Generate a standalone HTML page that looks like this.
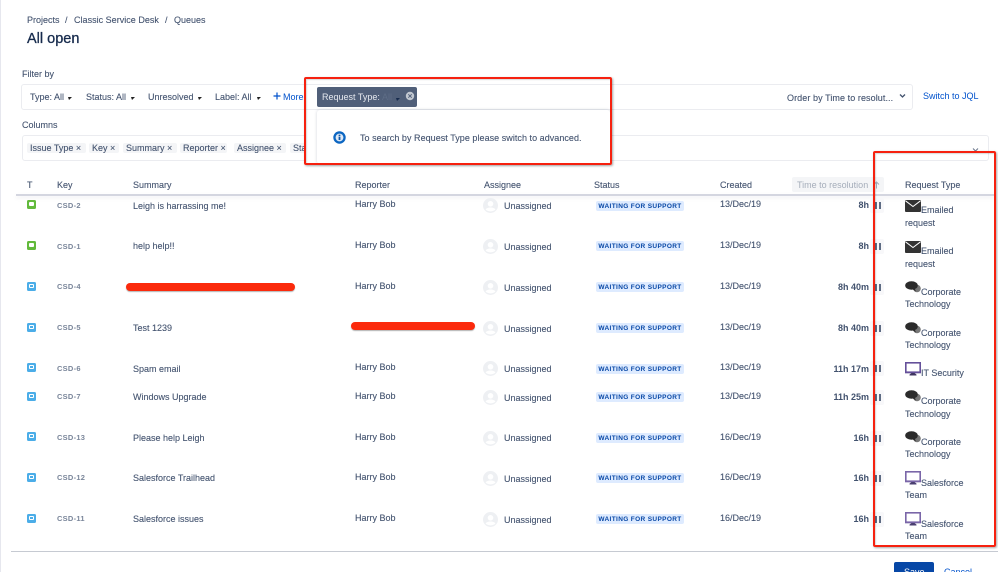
<!DOCTYPE html>
<html>
<head>
<meta charset="utf-8">
<style>
html,body{margin:0;padding:0;background:#fff;}
body{width:998px;height:572px;overflow:hidden;position:relative;font-family:"Liberation Sans",sans-serif;font-size:9px;color:#42526e;}
#w{position:absolute;left:0;top:0;width:998px;height:572px;overflow:hidden;filter:blur(.35px);}
.t{position:absolute;white-space:nowrap;line-height:12px;height:12px;}
.b{position:absolute;box-sizing:border-box;}
.k{color:#7a869a;font-size:7.5px;font-weight:bold;letter-spacing:.25px;}
.h{color:#42526e;-webkit-text-stroke:.1px #42526e;}
.chip{position:absolute;top:143px;height:10px;background:#f4f5f7;border-radius:2px;}
.lz{position:absolute;left:596px;width:88px;height:10px;background:#deebff;border-radius:2px;color:#0747a6;font-size:6.5px;font-weight:bold;line-height:11px;text-align:center;letter-spacing:.35px;white-space:nowrap;}
.ib{position:absolute;left:27px;width:9px;height:9px;border-radius:1.5px;}
.g{background:#63ba3c;}
.bl{background:#4bade8;}
.ib i{position:absolute;left:2px;top:2px;width:5px;height:4px;background:#fff;border-radius:1px;}
.bl i:after{content:"";position:absolute;left:1px;top:1px;width:3px;height:1.5px;background:#4bade8;}
.av{position:absolute;left:483px;width:15px;height:15px;}
.p{position:absolute;left:870px;width:14px;height:15px;background:#f8f8fa;border-radius:2px;}
.p:before,.p:after{content:"";position:absolute;top:4px;width:2px;height:7px;background:#5e6c84;}
.p:before{left:5px;}
.p:after{left:9px;}
.tm{position:absolute;right:129px;font-weight:bold;color:#42526e;line-height:12px;white-space:nowrap;}
.ar{position:absolute;width:4px;height:4px;}
.ic{position:absolute;left:905px;}
.red{position:absolute;box-sizing:border-box;border:2.5px solid #f6210f;border-radius:2px;box-shadow:1px 1px 2px rgba(0,0,0,.35),inset 1px 1px 1px rgba(0,0,0,.15);}
.st{position:absolute;background:#fb2a0c;border-radius:5px;height:8px;box-shadow:0 1px 1px rgba(0,0,0,.3);}
</style>
</head>
<body>
<div id="w">
<div class="b" style="left:0;top:0;width:1px;height:572px;background:#e6e7ee;"></div>

<div class="t h" style="left:27px;top:14px;">Projects</div>
<div class="t h" style="left:65px;top:14px;">/</div>
<div class="t h" style="left:74px;top:14px;letter-spacing:.02px;">Classic Service Desk</div>
<div class="t h" style="left:165px;top:14px;">/</div>
<div class="t h" style="left:174px;top:14px;">Queues</div>
<div class="t" style="left:27px;top:31px;height:17px;line-height:17px;font-size:14.5px;color:#172b4d;-webkit-text-stroke:.3px #172b4d;">All open</div>

<div class="t h" style="left:22px;top:68px;">Filter by</div>
<div class="b" style="left:21px;top:84px;width:892px;height:26px;border:1px solid #ebecf0;border-radius:3px;"></div>
<div class="t h" style="left:30px;top:91px;">Type: All</div>
<div class="t h" style="left:86px;top:91px;">Status: All</div>
<div class="t h" style="left:148px;top:91px;">Unresolved</div>
<div class="t h" style="left:215px;top:91px;">Label: All</div>
<svg class="ar" style="left:68px;top:96px" viewBox="0 0 4 4"><path d="M0 1H4L1 4Z" fill="#222"/></svg>
<svg class="ar" style="left:131px;top:96px" viewBox="0 0 4 4"><path d="M0 1H4L1 4Z" fill="#222"/></svg>
<svg class="ar" style="left:198px;top:96px" viewBox="0 0 4 4"><path d="M0 1H4L1 4Z" fill="#222"/></svg>
<svg class="ar" style="left:257px;top:96px" viewBox="0 0 4 4"><path d="M0 1H4L1 4Z" fill="#222"/></svg>
<svg style="position:absolute;left:273px;top:92px" width="8" height="8" viewBox="0 0 8 8"><path d="M4 .5V7.5M.5 4H7.5" stroke="#0052cc" stroke-width="1.2"/></svg>
<div class="t" style="left:283px;top:91px;color:#0052cc;">More</div>

<div class="t h" style="left:787px;top:92px;letter-spacing:.08px;">Order by Time to resolut...</div>
<svg style="position:absolute;left:899px;top:93px" width="7" height="6" viewBox="0 0 7 6"><path d="M1 1.5L3.5 4L6 1.5" stroke="#42526e" stroke-width="1.3" fill="none"/></svg>
<div class="t" style="left:923px;top:90px;color:#0052cc;">Switch to JQL</div>

<div class="t h" style="left:22px;top:119px;">Columns</div>
<div class="b" style="left:22px;top:135px;width:967px;height:26px;border:1px solid #ebecf0;border-radius:3px;"></div>
<div class="chip" style="left:27px;width:59px;"></div>
<div class="chip" style="left:89px;width:30px;"></div>
<div class="chip" style="left:123px;width:54px;"></div>
<div class="chip" style="left:180px;width:47px;"></div>
<div class="chip" style="left:234px;width:52px;"></div>
<div class="chip" style="left:290px;width:30px;"></div>
<div class="t h" style="left:30px;top:142px;">Issue Type ×</div>
<div class="t h" style="left:92px;top:142px;">Key ×</div>
<div class="t h" style="left:126px;top:142px;">Summary ×</div>
<div class="t h" style="left:183px;top:142px;">Reporter ×</div>
<div class="t h" style="left:237px;top:142px;">Assignee ×</div>
<div class="t h" style="left:293px;top:142px;">Status</div>
<svg style="position:absolute;left:972px;top:148px" width="7" height="4" viewBox="0 0 7 4"><path d="M1 .5L3.5 3L6 .5" stroke="#6b778c" stroke-width="1" fill="none"/></svg>

<!-- popup -->
<div class="b" style="left:305px;top:78px;width:305px;height:86px;background:#fff;"></div>
<div class="b" style="left:305px;top:84px;width:305px;height:26px;border-top:1px solid #ebecf0;border-bottom:1px solid #ebecf0;"></div>
<div class="b" style="left:317px;top:110px;width:293px;height:54px;background:#fff;border-radius:3px;box-shadow:0 0 3px rgba(9,30,66,.18);"></div>
<div class="b" style="left:317px;top:87px;width:100px;height:20px;background:#505f79;border-radius:2px;"></div>
<div class="t" style="left:322px;top:91px;color:#e6e9ef;">Request Type:</div>
<div class="t" style="left:382px;top:91px;color:#5e6d86;">All</div>
<svg class="ar" style="left:396px;top:97px" viewBox="0 0 4 4"><path d="M0 1H4L1 4Z" fill="#172b4d"/></svg>
<svg style="position:absolute;left:405px;top:91px" width="10" height="10" viewBox="0 0 10 10"><circle cx="5" cy="5" r="4.2" fill="#c1c7d0"/><path d="M3.3 3.3L6.7 6.7M6.7 3.3L3.3 6.7" stroke="#505f79" stroke-width="1"/></svg>
<svg style="position:absolute;left:333px;top:131px" width="13" height="13" viewBox="0 0 13 13"><circle cx="6.5" cy="6.5" r="6.2" fill="#0c66c2"/><circle cx="6.5" cy="6.5" r="3.9" fill="#dfe9f5"/><rect x="5.6" y="5.6" width="1.8" height="3.4" fill="#0c56a8"/><rect x="5.6" y="3.7" width="1.8" height="1.3" fill="#0c56a8"/></svg>
<div class="t h" style="left:360px;top:132px;letter-spacing:.04px;">To search by Request Type please switch to advanced.</div>

<!-- table header -->
<div class="t h" style="left:27px;top:179px;">T</div>
<div class="t h" style="left:57px;top:179px;">Key</div>
<div class="t h" style="left:133px;top:179px;">Summary</div>
<div class="t h" style="left:355px;top:179px;">Reporter</div>
<div class="t h" style="left:484px;top:179px;">Assignee</div>
<div class="t h" style="left:594px;top:179px;">Status</div>
<div class="t h" style="left:720px;top:179px;">Created</div>
<div class="b" style="left:792px;top:177px;width:92px;height:15px;background:#f4f5f7;border-radius:2px;"></div>
<div class="t" style="left:797px;top:179px;color:#a5adba;">Time to resolution</div>
<svg style="position:absolute;left:873px;top:181px" width="7" height="8" viewBox="0 0 7 8"><path d="M3.5 7.5V1M1 3.5L3.5 1L6 3.5" stroke="#a5adba" stroke-width="1" fill="none"/></svg>
<div class="t h" style="left:905px;top:179px;">Request Type</div>
<div class="b" style="left:16px;top:194px;width:979px;height:2px;background:#d4d6e0;box-shadow:0 2px 4px rgba(9,30,66,.08);"></div>

<!-- type icons -->
<div class="ib g" style="top:200px;"><i></i></div>
<div class="ib g" style="top:241px;"><i></i></div>
<div class="ib bl" style="top:282px;"><i></i></div>
<div class="ib bl" style="top:323px;"><i></i></div>
<div class="ib bl" style="top:363px;"><i></i></div>
<div class="ib bl" style="top:392px;"><i></i></div>
<div class="ib bl" style="top:432px;"><i></i></div>
<div class="ib bl" style="top:473px;"><i></i></div>
<div class="ib bl" style="top:514px;"><i></i></div>

<!-- keys -->
<div class="t k" style="left:57px;top:200px;">CSD-2</div>
<div class="t k" style="left:57px;top:241px;">CSD-1</div>
<div class="t k" style="left:57px;top:281px;">CSD-4</div>
<div class="t k" style="left:57px;top:322px;">CSD-5</div>
<div class="t k" style="left:57px;top:363px;">CSD-6</div>
<div class="t k" style="left:57px;top:391px;">CSD-7</div>
<div class="t k" style="left:57px;top:432px;">CSD-13</div>
<div class="t k" style="left:57px;top:472px;">CSD-12</div>
<div class="t k" style="left:57px;top:513px;">CSD-11</div>

<!-- summaries -->
<div class="t h" style="left:133px;top:200px;">Leigh is harrassing me!</div>
<div class="t h" style="left:133px;top:240px;">help help!!</div>
<div class="t h" style="left:133px;top:322px;">Test 1239</div>
<div class="t h" style="left:133px;top:363px;">Spam email</div>
<div class="t h" style="left:133px;top:391px;">Windows Upgrade</div>
<div class="t h" style="left:133px;top:432px;">Please help Leigh</div>
<div class="t h" style="left:133px;top:472px;">Salesforce Trailhead</div>
<div class="t h" style="left:133px;top:513px;">Salesforce issues</div>

<!-- reporters -->
<div class="t h" style="left:355px;top:198px;">Harry Bob</div>
<div class="t h" style="left:355px;top:239px;">Harry Bob</div>
<div class="t h" style="left:355px;top:280px;">Harry Bob</div>
<div class="t h" style="left:355px;top:361px;">Harry Bob</div>
<div class="t h" style="left:355px;top:390px;">Harry Bob</div>
<div class="t h" style="left:355px;top:431px;">Harry Bob</div>
<div class="t h" style="left:355px;top:471px;">Harry Bob</div>
<div class="t h" style="left:355px;top:512px;">Harry Bob</div>

<!-- avatars -->
<svg class="av" style="top:198px" viewBox="0 0 15 15"><circle cx="7.5" cy="7.5" r="7.5" fill="#eef0f3"/><circle cx="7.5" cy="5.8" r="2.8" fill="#fff"/><path d="M2.6 11.5C4 8.8 11 8.8 12.4 11.5C10 14 5 14 2.6 11.5Z" fill="#fff"/></svg>
<svg class="av" style="top:239px" viewBox="0 0 15 15"><circle cx="7.5" cy="7.5" r="7.5" fill="#eef0f3"/><circle cx="7.5" cy="5.8" r="2.8" fill="#fff"/><path d="M2.6 11.5C4 8.8 11 8.8 12.4 11.5C10 14 5 14 2.6 11.5Z" fill="#fff"/></svg>
<svg class="av" style="top:280px" viewBox="0 0 15 15"><circle cx="7.5" cy="7.5" r="7.5" fill="#eef0f3"/><circle cx="7.5" cy="5.8" r="2.8" fill="#fff"/><path d="M2.6 11.5C4 8.8 11 8.8 12.4 11.5C10 14 5 14 2.6 11.5Z" fill="#fff"/></svg>
<svg class="av" style="top:321px" viewBox="0 0 15 15"><circle cx="7.5" cy="7.5" r="7.5" fill="#eef0f3"/><circle cx="7.5" cy="5.8" r="2.8" fill="#fff"/><path d="M2.6 11.5C4 8.8 11 8.8 12.4 11.5C10 14 5 14 2.6 11.5Z" fill="#fff"/></svg>
<svg class="av" style="top:361px" viewBox="0 0 15 15"><circle cx="7.5" cy="7.5" r="7.5" fill="#eef0f3"/><circle cx="7.5" cy="5.8" r="2.8" fill="#fff"/><path d="M2.6 11.5C4 8.8 11 8.8 12.4 11.5C10 14 5 14 2.6 11.5Z" fill="#fff"/></svg>
<svg class="av" style="top:390px" viewBox="0 0 15 15"><circle cx="7.5" cy="7.5" r="7.5" fill="#eef0f3"/><circle cx="7.5" cy="5.8" r="2.8" fill="#fff"/><path d="M2.6 11.5C4 8.8 11 8.8 12.4 11.5C10 14 5 14 2.6 11.5Z" fill="#fff"/></svg>
<svg class="av" style="top:431px" viewBox="0 0 15 15"><circle cx="7.5" cy="7.5" r="7.5" fill="#eef0f3"/><circle cx="7.5" cy="5.8" r="2.8" fill="#fff"/><path d="M2.6 11.5C4 8.8 11 8.8 12.4 11.5C10 14 5 14 2.6 11.5Z" fill="#fff"/></svg>
<svg class="av" style="top:471px" viewBox="0 0 15 15"><circle cx="7.5" cy="7.5" r="7.5" fill="#eef0f3"/><circle cx="7.5" cy="5.8" r="2.8" fill="#fff"/><path d="M2.6 11.5C4 8.8 11 8.8 12.4 11.5C10 14 5 14 2.6 11.5Z" fill="#fff"/></svg>
<svg class="av" style="top:512px" viewBox="0 0 15 15"><circle cx="7.5" cy="7.5" r="7.5" fill="#eef0f3"/><circle cx="7.5" cy="5.8" r="2.8" fill="#fff"/><path d="M2.6 11.5C4 8.8 11 8.8 12.4 11.5C10 14 5 14 2.6 11.5Z" fill="#fff"/></svg>

<!-- assignee -->
<div class="t h" style="left:504px;top:200px;">Unassigned</div>
<div class="t h" style="left:504px;top:241px;">Unassigned</div>
<div class="t h" style="left:504px;top:282px;">Unassigned</div>
<div class="t h" style="left:504px;top:323px;">Unassigned</div>
<div class="t h" style="left:504px;top:363px;">Unassigned</div>
<div class="t h" style="left:504px;top:392px;">Unassigned</div>
<div class="t h" style="left:504px;top:432px;">Unassigned</div>
<div class="t h" style="left:504px;top:473px;">Unassigned</div>
<div class="t h" style="left:504px;top:514px;">Unassigned</div>

<!-- status -->
<div class="lz" style="top:201px;">WAITING FOR SUPPORT</div>
<div class="lz" style="top:241px;">WAITING FOR SUPPORT</div>
<div class="lz" style="top:282px;">WAITING FOR SUPPORT</div>
<div class="lz" style="top:323px;">WAITING FOR SUPPORT</div>
<div class="lz" style="top:364px;">WAITING FOR SUPPORT</div>
<div class="lz" style="top:392px;">WAITING FOR SUPPORT</div>
<div class="lz" style="top:433px;">WAITING FOR SUPPORT</div>
<div class="lz" style="top:473px;">WAITING FOR SUPPORT</div>
<div class="lz" style="top:514px;">WAITING FOR SUPPORT</div>

<!-- created -->
<div class="t h" style="left:720px;top:198px;">13/Dec/19</div>
<div class="t h" style="left:720px;top:239px;">13/Dec/19</div>
<div class="t h" style="left:720px;top:280px;">13/Dec/19</div>
<div class="t h" style="left:720px;top:321px;">13/Dec/19</div>
<div class="t h" style="left:720px;top:361px;">13/Dec/19</div>
<div class="t h" style="left:720px;top:390px;">13/Dec/19</div>
<div class="t h" style="left:720px;top:431px;">16/Dec/19</div>
<div class="t h" style="left:720px;top:471px;">16/Dec/19</div>
<div class="t h" style="left:720px;top:512px;">16/Dec/19</div>

<!-- time -->
<div class="p" style="top:198px;"></div><div class="tm" style="top:199px;">8h</div>
<div class="p" style="top:239px;"></div><div class="tm" style="top:240px;">8h</div>
<div class="p" style="top:280px;"></div><div class="tm" style="top:281px;">8h 40m</div>
<div class="p" style="top:321px;"></div><div class="tm" style="top:322px;">8h 40m</div>
<div class="p" style="top:361px;"></div><div class="tm" style="top:363px;">11h 17m</div>
<div class="p" style="top:390px;"></div><div class="tm" style="top:391px;">11h 25m</div>
<div class="p" style="top:431px;"></div><div class="tm" style="top:432px;">16h</div>
<div class="p" style="top:471px;"></div><div class="tm" style="top:472px;">16h</div>
<div class="p" style="top:512px;"></div><div class="tm" style="top:513px;">16h</div>

<!-- request types -->
<svg class="ic" style="top:200px" width="16" height="12" viewBox="0 0 16 12"><path d="M0 1Q0 0 1 0H15Q16 0 16 1V11Q16 12 15 12H1Q0 12 0 11Z" fill="#333"/><path d="M.5 .8L8 6.5L15.5 .8" stroke="#fff" stroke-width="1" fill="none"/></svg>
<div class="t h" style="left:921px;top:204px;">Emailed</div><div class="t h" style="left:905px;top:217px;">request</div>
<svg class="ic" style="top:241px" width="16" height="12" viewBox="0 0 16 12"><path d="M0 1Q0 0 1 0H15Q16 0 16 1V11Q16 12 15 12H1Q0 12 0 11Z" fill="#333"/><path d="M.5 .8L8 6.5L15.5 .8" stroke="#fff" stroke-width="1" fill="none"/></svg>
<div class="t h" style="left:921px;top:245px;">Emailed</div><div class="t h" style="left:905px;top:258px;">request</div>

<svg class="ic" style="top:281px" width="16" height="12" viewBox="0 0 16 12"><circle cx="12" cy="7.5" r="3.8" fill="#777"/><ellipse cx="6.5" cy="4.5" rx="6.3" ry="4.2" fill="#2b2b2b"/><path d="M7 8L11 10.5L9.5 7Z" fill="#2b2b2b"/></svg>
<div class="t h" style="left:921px;top:286px;">Corporate</div><div class="t h" style="left:905px;top:298px;">Technology</div>
<svg class="ic" style="top:322px" width="16" height="12" viewBox="0 0 16 12"><circle cx="12" cy="7.5" r="3.8" fill="#777"/><ellipse cx="6.5" cy="4.5" rx="6.3" ry="4.2" fill="#2b2b2b"/><path d="M7 8L11 10.5L9.5 7Z" fill="#2b2b2b"/></svg>
<div class="t h" style="left:921px;top:327px;">Corporate</div><div class="t h" style="left:905px;top:339px;">Technology</div>

<svg class="ic" style="top:362px" width="16" height="14" viewBox="0 0 16 14"><rect x=".8" y=".8" width="14.4" height="9.6" fill="#fff" stroke="#65509a" stroke-width="1.6"/><path d="M0 9.4H16V11.2H0Z" fill="#65509a"/><path d="M4.5 13.5H11.5V12.6L9.5 11H6.5L4.5 12.6Z" fill="#3f3560"/></svg>
<div class="t h" style="left:921px;top:367px;">IT Security</div>

<svg class="ic" style="top:390px" width="16" height="12" viewBox="0 0 16 12"><circle cx="12" cy="7.5" r="3.8" fill="#777"/><ellipse cx="6.5" cy="4.5" rx="6.3" ry="4.2" fill="#2b2b2b"/><path d="M7 8L11 10.5L9.5 7Z" fill="#2b2b2b"/></svg>
<div class="t h" style="left:921px;top:395px;">Corporate</div><div class="t h" style="left:905px;top:408px;">Technology</div>
<svg class="ic" style="top:431px" width="16" height="12" viewBox="0 0 16 12"><circle cx="12" cy="7.5" r="3.8" fill="#777"/><ellipse cx="6.5" cy="4.5" rx="6.3" ry="4.2" fill="#2b2b2b"/><path d="M7 8L11 10.5L9.5 7Z" fill="#2b2b2b"/></svg>
<div class="t h" style="left:921px;top:436px;">Corporate</div><div class="t h" style="left:905px;top:448px;">Technology</div>

<svg class="ic" style="top:471px" width="16" height="14" viewBox="0 0 16 14"><rect x=".8" y=".8" width="14.4" height="9.6" fill="#fff" stroke="#7a66a8" stroke-width="1.6"/><path d="M0 9.4H16V11.2H0Z" fill="#7a66a8"/><path d="M4.5 13.5H11.5V12.6L9.5 11H6.5L4.5 12.6Z" fill="#4a3f70"/></svg>
<div class="t h" style="left:921px;top:477px;">Salesforce</div><div class="t h" style="left:905px;top:489px;">Team</div>
<svg class="ic" style="top:512px" width="16" height="14" viewBox="0 0 16 14"><rect x=".8" y=".8" width="14.4" height="9.6" fill="#fff" stroke="#7a66a8" stroke-width="1.6"/><path d="M0 9.4H16V11.2H0Z" fill="#7a66a8"/><path d="M4.5 13.5H11.5V12.6L9.5 11H6.5L4.5 12.6Z" fill="#4a3f70"/></svg>
<div class="t h" style="left:921px;top:518px;">Salesforce</div><div class="t h" style="left:905px;top:530px;">Team</div>

<!-- strikes -->
<div class="st" style="left:126px;top:283px;width:169px;"></div>
<div class="st" style="left:351px;top:322px;width:124px;"></div>

<!-- footer -->
<div class="b" style="left:11px;top:551px;width:987px;height:1px;background:#c6cad2;"></div>
<div class="b" style="left:894px;top:562px;width:40px;height:14px;background:#0747a6;border-radius:2px;"></div>
<div class="t" style="left:904px;top:566px;color:#fff;">Save</div>
<div class="t" style="left:944px;top:566px;color:#0052cc;">Cancel</div>

<!-- red annotation boxes -->
<div class="red" style="left:304px;top:77px;width:308px;height:88px;"></div>
<div class="red" style="left:873px;top:151px;width:123px;height:396px;"></div>
</div>
</body>
</html>
